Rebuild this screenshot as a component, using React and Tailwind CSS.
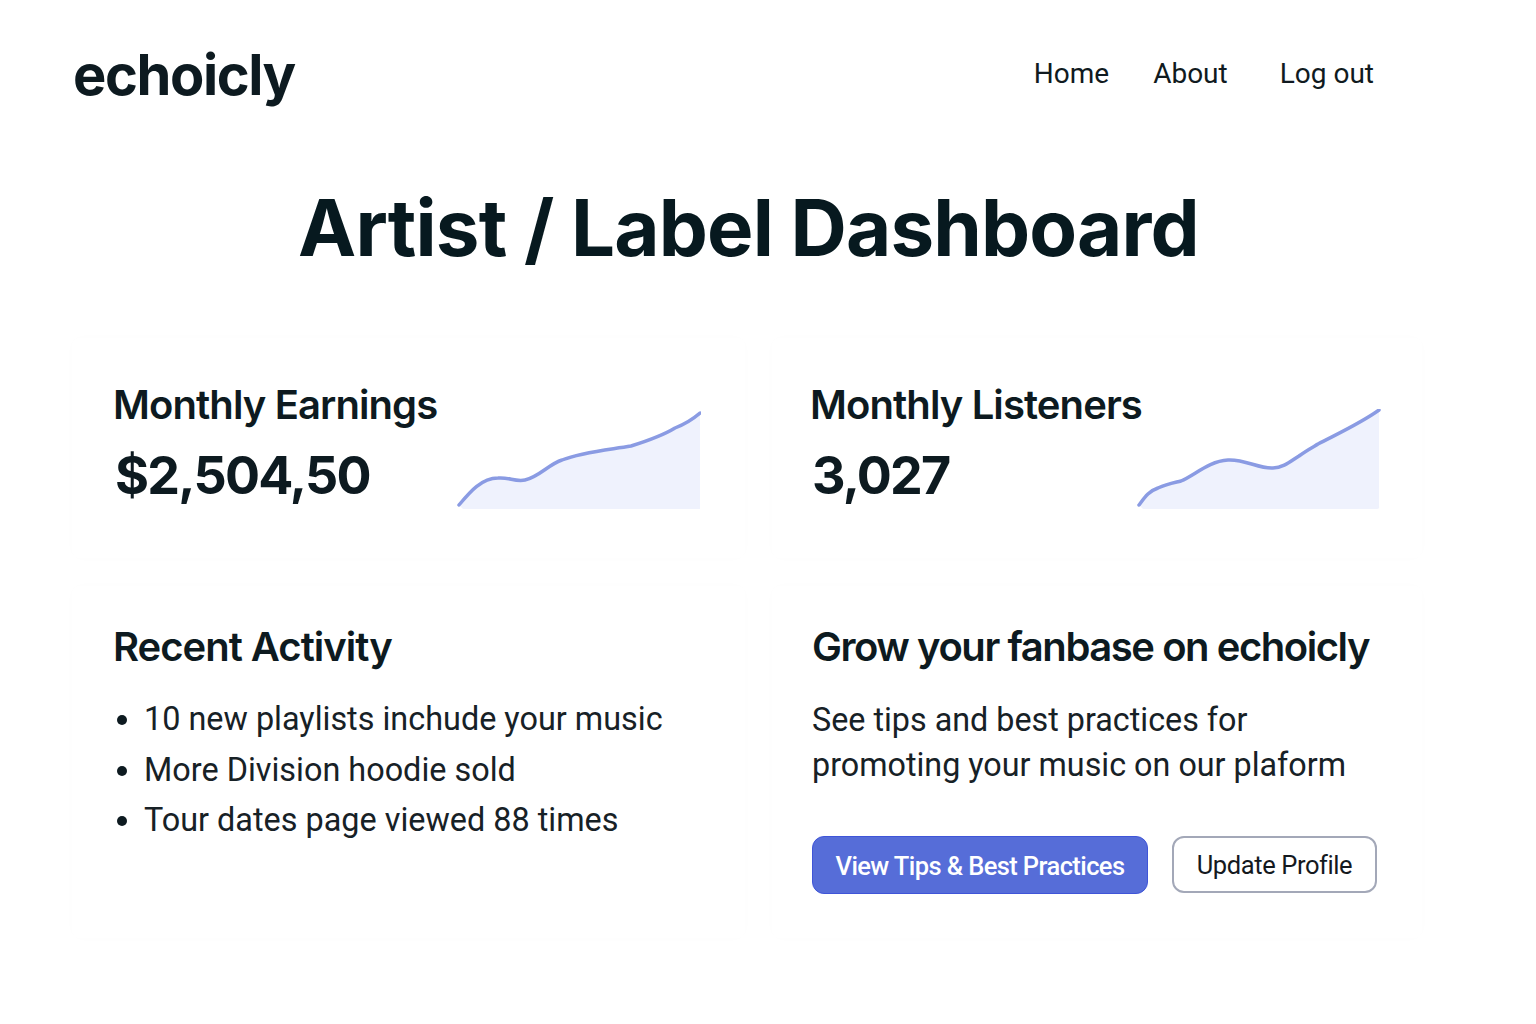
const inter = { fontFamily: 'Inter, sans-serif' };
const roboto = { fontFamily: 'Roboto, sans-serif' };

const Sparkline = ({ line, area }) => (
  <svg width="244" height="102" viewBox="0 0 244 102" fill="none">
    <path d={area} fill="#eff2fd" />
    <path d={line} stroke="#8a9be3" strokeWidth="3.5" strokeLinecap="round" />
  </svg>
);

const earningsLine = 'M2 96C12 84 24 69 41 69C52 68 58 73 68 71C82 68 92 55 105 51C125 43 150 41 174 37C190 32 205 27 218 19C228 15 236 10 243 4';
const listenersLine = 'M2 96C8 88 12 82 21 79C30 75 36 74 44 72C58 66 72 52 91 51C108 50 122 60 136 59C146 59 154 52 162 47C170 41 178 37 181 35C200 25 224 14 242 1';

const StatCard = ({ title, value, line, area, className }) => (
  <div className={`flex items-end justify-between rounded-lg bg-white shadow-[0_0_14px_rgba(0,0,0,0.012)] h-[220px] ${className}`}>
    <div className="self-start flex-1 min-w-0 pt-[42px]">
      <h2 className="text-[40px] leading-[50px] font-semibold tracking-[-0.9px] text-[#0d1a20] whitespace-nowrap">{title}</h2>
      <p className="mt-[18px] ml-[2px] text-[52px] leading-[56px] font-bold tracking-[-1.8px] text-[#0d1a20]">{value}</p>
    </div>
    <div className="mb-[47px] -mr-[1px] shrink-0">
      <Sparkline line={line} area={area} />
    </div>
  </div>
);

export default function App() {
  return (
    <div className="min-h-[1024px] w-[1536px] bg-white text-[#0d1a20] overflow-hidden" style={inter}>
      <header className="flex items-center justify-between pl-[73px] pr-[162px] pt-[40px] h-[150px]">
        <div className="text-[56px] leading-[72px] font-bold tracking-[-1.4px] -mt-[40px]">echoicly</div>
        <nav className="flex text-[28px] leading-[36px] text-[#101a20] -mt-[42px]" style={roboto}>
          <a className="mr-[44px]">Home</a>
          <a className="mr-[52px]">About</a>
          <a>Log out</a>
        </nav>
      </header>

      <h1 className="ml-[298px] mt-[28px] text-[78px] leading-[100px] font-bold tracking-[-0.85px] text-[#07191f] whitespace-nowrap">
        Artist / Label Dashboard
      </h1>

      <main className="ml-[72px] mt-[60px] grid grid-cols-[673px_650px] grid-rows-[220px_352px] gap-x-[27px] gap-y-[28px]">
        <StatCard
          title="Monthly Earnings"
          value="$2,504,50"
          line={earningsLine}
          area={`${earningsLine}V100H6Z`}
          className="pl-[41px] pr-[45px]"
        />
        <StatCard
          title="Monthly Listeners"
          value="3,027"
          line={listenersLine}
          area={`${listenersLine}V97Q243 100 240 100H6Z`}
          className="pl-[38px] pr-[42px]"
        />

        <section className="rounded-lg bg-white shadow-[0_0_14px_rgba(0,0,0,0.012)] pl-[41px] pt-[36px]">
          <h2 className="text-[40px] leading-[50px] font-semibold tracking-[-1px]">Recent Activity</h2>
          <ul className="mt-[22px] list-disc pl-[31px] text-[32.4px] leading-[50.5px] text-[#172126] marker:text-[#0d1a20]" style={roboto}>
            <li>10 new playlists inchude your music</li>
            <li>More Division hoodie sold</li>
            <li>Tour dates page viewed 88 times</li>
          </ul>
        </section>

        <section className="rounded-lg bg-white shadow-[0_0_14px_rgba(0,0,0,0.012)] pl-[40px] pt-[36px]">
          <h2 className="text-[40px] leading-[50px] font-semibold tracking-[-1.45px] whitespace-nowrap">Grow your fanbase on echoicly</h2>
          <p className="mt-[26px] text-[32.3px] leading-[45px] text-[#172126] whitespace-nowrap" style={roboto}>
            See tips and best practices for<br />promoting your music on our plaform
          </p>
          <div className="mt-[48px] flex gap-[24px]" style={roboto}>
            <button className="h-[58px] w-[336px] pt-[2px] rounded-[12px] border border-[#3f55d8] bg-[#566dd8] text-[25.5px] tracking-[-0.6px] font-medium text-white">
              View Tips &amp; Best Practices
            </button>
            <button className="h-[57px] w-[205px] pt-[2px] rounded-[12px] border-2 border-[#a3a8b8] bg-white text-[25.5px] tracking-[-0.4px] text-[#14191e]">
              Update Profile
            </button>
          </div>
        </section>
      </main>
    </div>
  );
}
